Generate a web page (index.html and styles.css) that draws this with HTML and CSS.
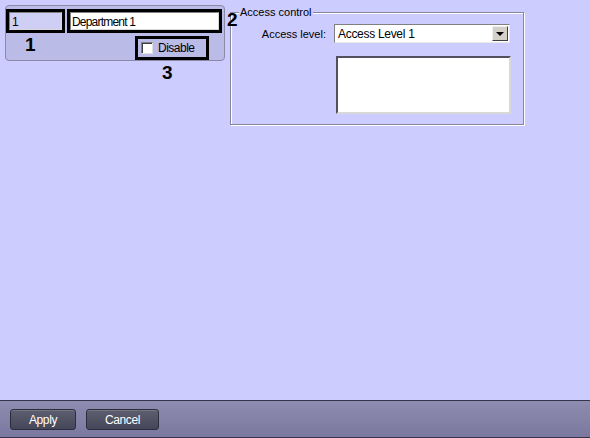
FILE: index.html
```html
<!DOCTYPE html>
<html lang="en">
<head>
    <meta charset="UTF-8">
    <title>Department</title>
    <link rel="stylesheet" href="styles.css">
</head>
<body>
    <div class="content">
        <!-- Department panel -->
        <div class="panel">
            <div class="panel-row">
                <div class="mark mark-id">
                    <div class="field field-disabled">1</div>
                </div>
                <div class="mark mark-name">
                    <div class="field">Department 1</div>
                </div>
            </div>
            <div class="mark mark-disable">
                <span class="checkbox"></span>
                <span>Disable</span>
            </div>
        </div>

        <!-- Access control group -->
        <div class="group">
            <span class="group-title">Access control</span>
            <div class="group-row">
                <label class="group-label">Access level:</label>
                <div class="select">
                    <span class="select-text">Access Level 1</span>
                    <span class="select-btn"><span class="arrow"></span></span>
                </div>
            </div>
            <div class="listbox"></div>
        </div>

        <!-- Callout numbers -->
        <span class="callout callout-1">1</span>
        <span class="callout callout-2">2</span>
        <span class="callout callout-3">3</span>
    </div>

    <div class="bottom-bar">
        <button class="btn btn-apply">Apply</button>
        <button class="btn btn-cancel">Cancel</button>
    </div>
</body>
</html>
```

FILE: styles.css
```css
body {
    margin: 0;
    width: 590px;
    height: 438px;
    background-color: #ccccfe;
    font-family: 'Liberation Sans', Arial, sans-serif;
    font-size: 11px;
    color: #000;
    display: flex;
    flex-direction: column;
    overflow: hidden;
}

.content {
    flex: 1;
    display: flex;
    align-items: flex-start;
    padding: 5px 0 0 5px;
    position: relative; /* for the callout numbers */
}

/* Left panel */
.panel {
    box-sizing: border-box;
    width: 220px;
    height: 56px;
    border: 1px solid #8a8aa8;
    border-radius: 4px;
    background-color: #bbbbe8;
    padding: 3px 0 0 0;
}

.panel-row {
    display: flex;
    gap: 2px;
}

.mark {
    box-sizing: border-box;
    border: 3px solid #000;
}

.mark-id {
    width: 59px;
    height: 24px;
}

.mark-name {
    width: 155px;
    height: 24px;
}

.field {
    box-sizing: border-box;
    height: 100%;
    background-color: #fff;
    border-top: 1px solid #808080;
    border-left: 1px solid #808080;
    border-right: 1px solid #d8d8d8;
    border-bottom: 1px solid #d8d8d8;
    padding: 2px 0 0 1px;
    font-size: 12px;
    letter-spacing: -0.8px;
    line-height: 14px;
    white-space: nowrap;
}

.field-disabled {
    background-color: #cfcff6;
    padding-left: 2px;
}

.mark-disable {
    width: 74px;
    height: 24px;
    margin: 3px 0 0 129px;
    display: flex;
    align-items: center;
    gap: 5px;
    padding-left: 3px;
    font-size: 12px;
    letter-spacing: -0.5px;
}

.checkbox {
    box-sizing: border-box;
    width: 12px;
    height: 12px;
    background-color: #fff;
    border-top: 1px solid #808080;
    border-left: 1px solid #808080;
    border-right: 1px solid #e0e0e0;
    border-bottom: 1px solid #e0e0e0;
    box-shadow: inset 1px 1px 0 #404040;
}

/* Access control group */
.group {
    box-sizing: border-box;
    width: 294px;
    height: 113px;
    margin: 7px 0 0 5px;
    border: 1px solid #868698;
    box-shadow: inset 1px 1px 0 #fff, 1px 1px 0 #fff;
    padding: 11px 0 0 0;
    position: relative;
}

.group-title {
    position: absolute;
    top: -7px;
    left: 8px;
    padding: 0 1px;
    background-color: #ccccfe;
    line-height: 12px;
}

.group-row {
    display: flex;
    align-items: center;
    gap: 8px;
}

.group-label {
    width: 95px;
    text-align: right;
}

.select {
    box-sizing: border-box;
    width: 176px;
    height: 19px;
    background-color: #fff;
    border-top: 1px solid #808080;
    border-left: 1px solid #808080;
    border-right: 1px solid #e8e8e8;
    border-bottom: 1px solid #e8e8e8;
    display: flex;
    align-items: center;
    padding: 1px 1px 1px 3px;
}

.select-text {
    flex: 1;
    font-size: 12px;
    letter-spacing: -0.3px;
}

.select-btn {
    box-sizing: border-box;
    width: 16px;
    height: 100%;
    background-color: #d4d0c8;
    border-top: 1px solid #f0f0f0;
    border-left: 1px solid #f0f0f0;
    border-right: 1px solid #404040;
    border-bottom: 1px solid #404040;
    display: flex;
    align-items: center;
    justify-content: center;
}

.arrow {
    width: 0;
    height: 0;
    border-left: 4px solid transparent;
    border-right: 4px solid transparent;
    border-top: 4px solid #000;
}

.listbox {
    box-sizing: border-box;
    width: 175px;
    height: 58px;
    margin: 13px 0 0 105px;
    background-color: #fff;
    border-top: 2px solid #505060;
    border-left: 2px solid #505060;
    border-right: 2px solid #d8d8d8;
    border-bottom: 2px solid #d8d8d8;
}

/* Callout numbers */
.callout {
    position: absolute;
    font-size: 19px;
    font-weight: bold;
    line-height: 19px;
}

.callout-1 {
    left: 25px;
    top: 35px;
}

.callout-2 {
    left: 227px;
    top: 10px;
}

.callout-3 {
    left: 162px;
    top: 63px;
}

/* Bottom bar */
.bottom-bar {
    box-sizing: border-box;
    height: 38px;
    border-top: 1px solid #34344a;
    border-bottom: 1px solid #34344a;
    background: linear-gradient(#8e8cb0, #7a789e);
    display: flex;
    align-items: flex-start;
    gap: 10px;
    padding: 8px 0 0 10px;
}

.btn {
    box-sizing: border-box;
    height: 21px;
    border: 1px solid #2c2c3c;
    border-radius: 3px;
    background: linear-gradient(#5e5e70, #46465a);
    box-shadow: inset 0 1px 0 rgba(255, 255, 255, 0.15);
    color: #fff;
    font-family: 'Liberation Sans', Arial, sans-serif;
    font-size: 12px;
    letter-spacing: -0.4px;
    padding: 0;
}

.btn-apply {
    width: 66px;
}

.btn-cancel {
    width: 73px;
}
```
